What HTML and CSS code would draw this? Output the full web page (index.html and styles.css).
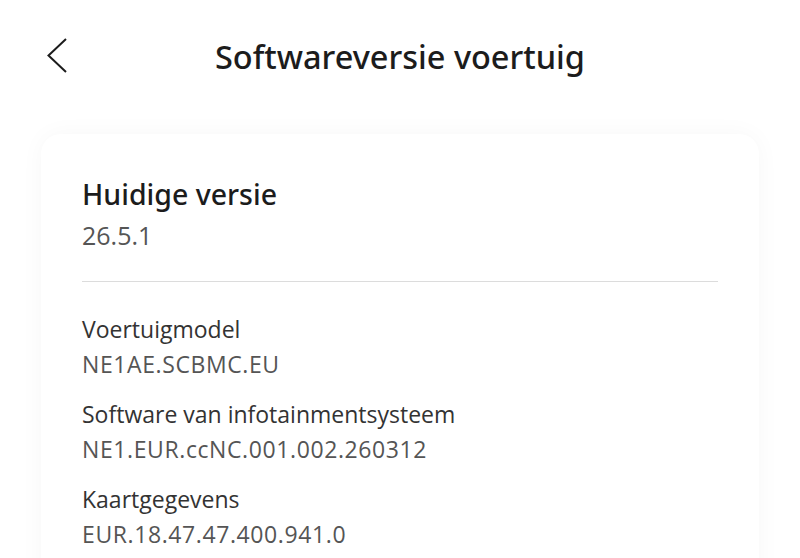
FILE: index.html
```html
<!DOCTYPE html>
<html lang="nl">
<head>
    <meta charset="UTF-8">
    <meta name="viewport" content="width=device-width, initial-scale=1.0">
    <title>Softwareversie voertuig</title>
    <link rel="stylesheet" href="styles.css">
</head>
<body>
    <div class="header">
        <button class="back-btn" aria-label="Terug">
            <svg width="24" height="40" viewBox="0 0 24 40">
                <path d="M22 3 L4.5 19.5 L22 36" fill="none" stroke="#1c1c1c" stroke-width="2"/>
            </svg>
        </button>
        <h1 class="title">Softwareversie voertuig</h1>
    </div>

    <div class="card">
        <div class="current">
            <h2 class="current-title">Huidige versie</h2>
            <p class="current-value">26.5.1</p>
        </div>
        <div class="divider"></div>
        <div class="info-list">
            <div class="info-item">
                <p class="info-label">Voertuigmodel</p>
                <p class="info-value">NE1AE.SCBMC.EU</p>
            </div>
            <div class="info-item">
                <p class="info-label">Software van infotainmentsysteem</p>
                <p class="info-value">NE1.EUR.ccNC.001.002.260312</p>
            </div>
            <div class="info-item">
                <p class="info-label">Kaartgegevens</p>
                <p class="info-value">EUR.18.47.47.400.941.0</p>
            </div>
        </div>
    </div>
</body>
</html>
```

FILE: styles.css
```css
* { box-sizing: border-box; margin: 0; padding: 0; }
body {
    font-family: "Open Sans", "Noto Sans", sans-serif;
    background: #ffffff;
    color: #1c1c1c;
    overflow: hidden;
}
.header {
    position: relative;
    height: 112px;
    display: flex;
    align-items: center;
    justify-content: center;
}
.back-btn {
    position: absolute;
    left: 44px;
    top: 36px;
    background: none;
    border: none;
    cursor: pointer;
}
.title {
    font-family: "Noto Sans", "Open Sans", sans-serif;
    font-size: 32.5px;
    font-weight: 500;
    color: #1c1c1c;
}
.card {
    margin: 22px 41px 0 41px;
    background: #fff;
    border-radius: 20px;
    box-shadow: 0 0 24px rgba(0,0,0,0.035);
    padding: 40px 41px 40px 41px;
}
.current-title {
    font-family: "Noto Sans", "Open Sans", sans-serif;
    font-size: 28.5px;
    line-height: 40px;
    font-weight: 500;
    color: #1c1c1c;
}
.current-value {
    font-size: 25px;
    line-height: 36px;
    color: #555;
    margin-top: 3px;
}
.divider {
    height: 1px;
    background: #dcdcdc;
    margin: 28px 0 30px;
}
.info-list {
    display: flex;
    flex-direction: column;
    gap: 15px;
}
.info-label {
    font-size: 23px;
    line-height: 35px;
    color: #333;
}
.info-value {
    font-size: 23px;
    line-height: 35px;
    letter-spacing: 0.6px;
    color: #555;
}
```
